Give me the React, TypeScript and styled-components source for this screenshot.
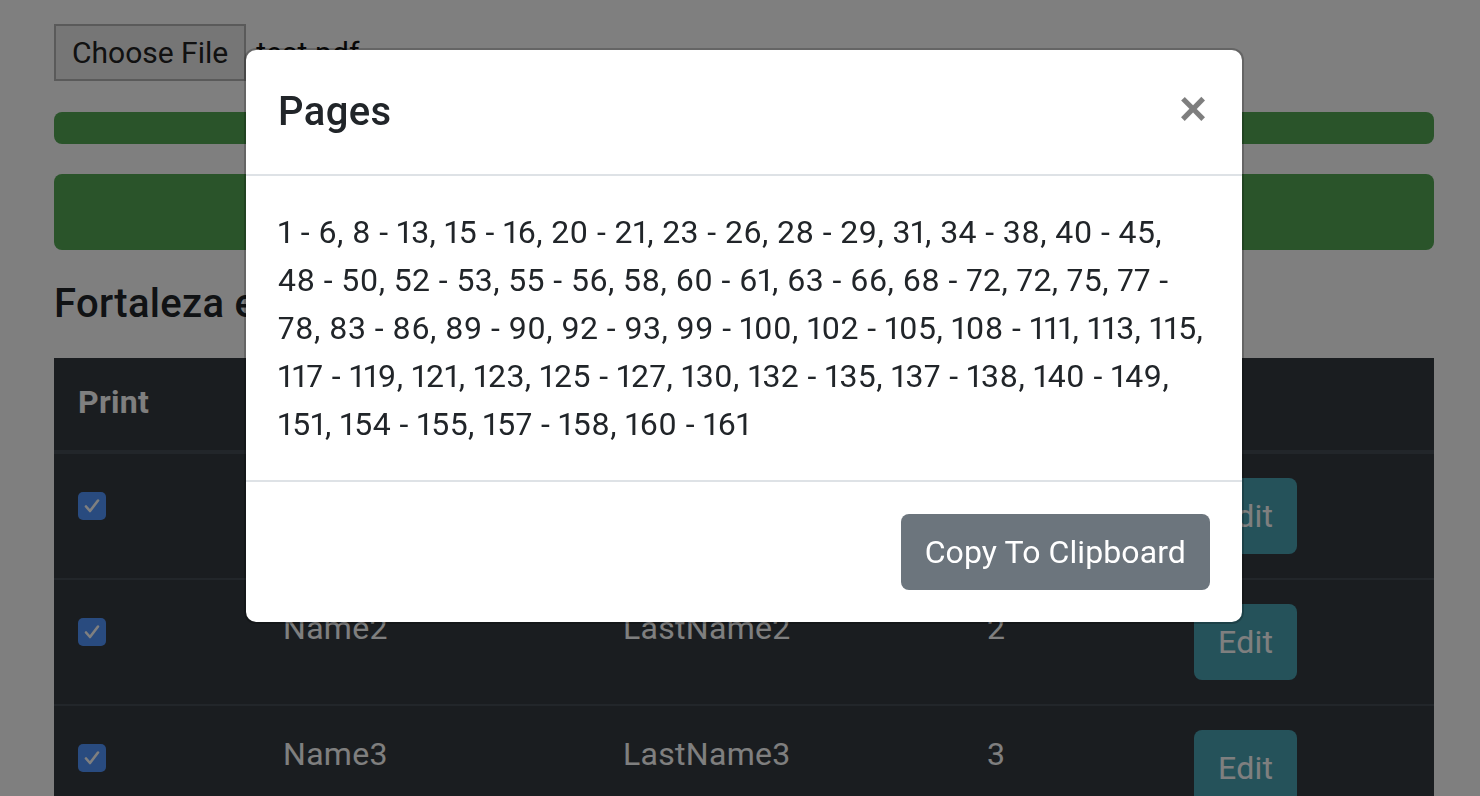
import styled, { createGlobalStyle } from 'styled-components';

const GlobalStyle = createGlobalStyle`
  html, body {
    margin: 0;
    padding: 0;
  }

  body {
    font-family: Roboto, 'Noto Sans', 'Liberation Sans', sans-serif;
    font-size: 32px;
    line-height: 48px;
    color: #212529;
    background-color: #fff;
    overflow: hidden;
  }
`;

const Container = styled.div`
  width: 1380px;
  margin-left: 54px;
  padding-top: 24px;
`;

const FileRow = styled.div`
  display: flex;
  align-items: center;
  gap: 10px;
  font-size: 30px;
`;

const FileButton = styled.span`
  display: inline-flex;
  align-items: center;
  height: 53px;
  padding: 0 16px;
  background: #ececec;
  border: 2px solid #b4b4b4;
  color: #222;
`;

const FileName = styled.span`
  color: #111;
`;

const Progress = styled.div`
  margin-top: 31px;
  height: 32px;
  border-radius: 8px;
  background: #54a854;
`;

const BlockButton = styled.div`
  margin-top: 30px;
  height: 76px;
  border-radius: 8px;
  background: #54a854;
`;

const Heading = styled.h5`
  margin: 30px 0 30px;
  font-size: 40px;
  line-height: 48px;
  font-weight: 500;
  letter-spacing: 0.3px;
`;

const Table = styled.table`
  width: 100%;
  table-layout: fixed;
  border-collapse: collapse;
  background: #343a40;
  color: #fff;
  letter-spacing: 0.3px;
`;

const Col = styled.col<{ $w?: number }>`
  width: ${(p) => (p.$w ? `${p.$w}px` : 'auto')};
`;

const Th = styled.th`
  padding: 20px 24px 24px;
  text-align: left;
  vertical-align: bottom;
  font-weight: 700;
  color: #fff;
  border-bottom: 4px solid #454d55;
`;

const Td = styled.td`
  padding: 24px;
  vertical-align: top;
  border-top: 2px solid #454d55;
`;

const Check = styled.span`
  display: flex;
  margin-top: 14px;
  width: 28px;
  height: 28px;
  border-radius: 5px;
  background: #5296ff;
  align-items: center;
  justify-content: center;
`;

const EditButton = styled.span`
  display: inline-block;
  padding: 14px 24px;
  border-radius: 8px;
  background: #4aa4b4;
  color: #fff;
`;

const Backdrop = styled.div`
  position: fixed;
  inset: 0;
  background: rgba(0, 0, 0, 0.5);
`;

const Dialog = styled.div`
  position: fixed;
  top: 48px;
  left: 244px;
  width: 1000px;
  box-sizing: border-box;
  background: #fff;
  border: 2px solid rgba(0, 0, 0, 0.2);
  border-radius: 12px;
  background-clip: padding-box;
`;

const ModalHeader = styled.div`
  display: flex;
  align-items: flex-start;
  justify-content: space-between;
  padding: 32px;
  border-bottom: 2px solid #dee2e6;
`;

const ModalTitle = styled.h5`
  margin: 0;
  font-size: 40px;
  line-height: 60px;
  font-weight: 500;
  letter-spacing: 0.4px;
`;

const Close = styled.span`
  padding: 35px 32px 29px;
  margin: -32px -29px -32px auto;
  font-size: 48px;
  line-height: 1;
  font-weight: 700;
  color: #000;
  opacity: 0.5;
  text-shadow: 0 2px 0 #fff;
  font-family: 'Liberation Sans', Arial, sans-serif;
`;

const ModalBody = styled.div`
  padding: 32px;
  letter-spacing: 0.4px;
  font-variant-numeric: proportional-nums;
`;

const PageLine = styled.div`
  white-space: nowrap;
`;

const ModalFooter = styled.div`
  display: flex;
  justify-content: flex-end;
  align-items: center;
  padding: 24px;
  border-top: 2px solid #dee2e6;
`;

const SecondaryButton = styled.span`
  margin: 8px;
  padding: 14px 24px;
  border-radius: 8px;
  background: #6c757d;
  color: #fff;
  letter-spacing: 0.1px;
`;

const rows = [1, 2, 3];

const pageLines = [
  '1 - 6, 8 - 13, 15 - 16, 20 - 21, 23 - 26, 28 - 29, 31, 34 - 38, 40 - 45,',
  '48 - 50, 52 - 53, 55 - 56, 58, 60 - 61, 63 - 66, 68 - 72, 72, 75, 77 -',
  '78, 83 - 86, 89 - 90, 92 - 93, 99 - 100, 102 - 105, 108 - 111, 113, 115,',
  '117 - 119, 121, 123, 125 - 127, 130, 132 - 135, 137 - 138, 140 - 149,',
  '151, 154 - 155, 157 - 158, 160 - 161',
];

function CheckMark() {
  return (
    <svg width="20" height="20" viewBox="0 0 20 20">
      <path d="M4 10.5 L8 15 L16 4.5" fill="none" stroke="#fff" strokeWidth="2.6" strokeLinecap="round" strokeLinejoin="round" />
    </svg>
  );
}

export default function App() {
  return (
    <>
      <GlobalStyle />
      <Container>
        <FileRow>
          <FileButton>Choose File</FileButton>
          <FileName>test.pdf</FileName>
        </FileRow>
        <Progress />
        <BlockButton />
        <Heading>Fortaleza em Cristo</Heading>
        <Table>
          <colgroup>
            <Col $w={205} />
            <Col $w={340} />
            <Col $w={364} />
            <Col $w={207} />
            <Col />
          </colgroup>
          <thead>
            <tr>
              <Th>Print</Th>
              <Th>First Name</Th>
              <Th>Last Name</Th>
              <Th>#</Th>
              <Th />
            </tr>
          </thead>
          <tbody>
            {rows.map((n) => (
              <tr key={n}>
                <Td>
                  <Check>
                    <CheckMark />
                  </Check>
                </Td>
                <Td>Name{n}</Td>
                <Td>LastName{n}</Td>
                <Td>{n}</Td>
                <Td>
                  <EditButton>Edit</EditButton>
                </Td>
              </tr>
            ))}
          </tbody>
        </Table>
      </Container>
      <Backdrop />
      <Dialog>
        <ModalHeader>
          <ModalTitle>Pages</ModalTitle>
          <Close>×</Close>
        </ModalHeader>
        <ModalBody>
          {pageLines.map((line) => (
            <PageLine key={line}>{line}</PageLine>
          ))}
        </ModalBody>
        <ModalFooter>
          <SecondaryButton>Copy To Clipboard</SecondaryButton>
        </ModalFooter>
      </Dialog>
    </>
  );
}
